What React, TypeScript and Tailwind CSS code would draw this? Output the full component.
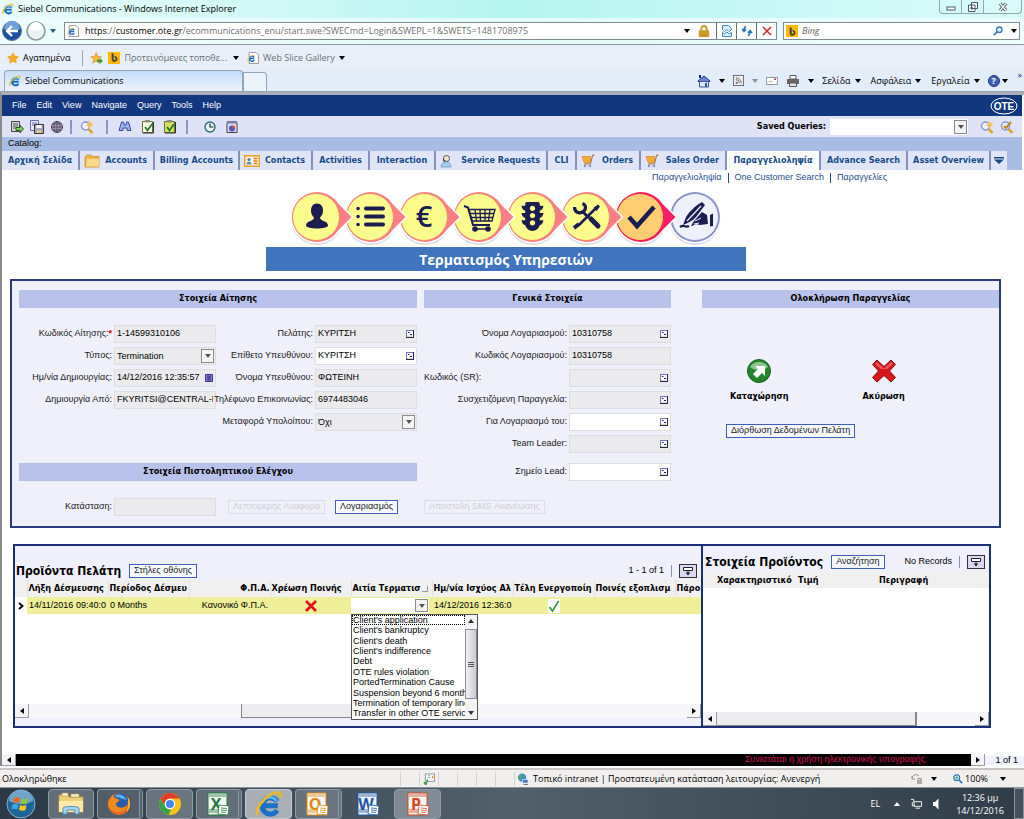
import React from "react";
import { BsBing } from "react-icons/bs";
import { FaTrafficLight, FaStar, FaLock } from "react-icons/fa";

type IconProps = { className?: string };

// wide bold face used by the CRM for titles, tabs and table headers
const boldFont = "font-bold [font-family:'DejaVu_Sans_Condensed','Noto_Sans',sans-serif]";

function Caret({ className = "text-black" }: IconProps) {
    return (
        <svg viewBox="0 0 6 4" className={`w-[6px] h-[4px] shrink-0 ${className}`}>
            <path d="M0 0h6L3 4z" fill="currentColor" />
        </svg>
    );
}

function IeLogo({ className = "w-3 h-3" }: IconProps) {
    return (
        <svg viewBox="0 0 24 24" className={`shrink-0 ${className}`}>
            <path d="M19.5 13.5H7M19 9.8A7 7 0 1 0 19 17.5" fill="none" stroke="#1b6fc4" strokeWidth="4.4" />
            <path d="M18.5 9.5A7 7 0 0 0 6 11" fill="none" stroke="#5bb5f0" strokeWidth="2.4" />
            <path d="M2.5 21.5C-1 17 8 5 17.5 2.5c4-1 5.5 1 4 4.5" fill="none" stroke="#e9b92c" strokeWidth="2.4" />
        </svg>
    );
}

function PageIcon({ className = "w-3 h-3.5" }: IconProps) {
    return (
        <svg viewBox="0 0 14 14" className={`shrink-0 ${className}`}>
            <path d="M2.5 .5h8l3 3v10h-11z" fill="#fff" stroke="#8a8a8a" />
            <path d="M8.5 7.5H3M8.3 6A3 3 0 1 0 8.5 9.5" fill="none" stroke="#1b6fc4" strokeWidth="1.8" />
            <path d="M1 11C0 9 4 4 9 3.5" fill="none" stroke="#e9b92c" strokeWidth="1" />
        </svg>
    );
}

function BingIcon() {
    return (
        <span className="flex h-3 w-3 shrink-0 items-center justify-center bg-[#ffb900] text-[9px] text-[#444]">
            <BsBing />
        </span>
    );
}

// ---------- Browser chrome ----------

function TitleBar() {
    return (
        <div className="flex h-[18px] items-start justify-between bg-linear-to-r from-[#eafcfb] via-[#b6f5f1] to-[#d9fbfa]">
            <div className="flex items-center gap-1 pl-0.5 pt-0.5 text-[9px] text-black">
                <IeLogo />
                <span>Siebel Communications - Windows Internet Explorer</span>
            </div>
            <div className="mr-0.5 flex h-3.5 rounded-b border border-t-0 border-[#8fa9ad] text-[#4a5a66]">
                <button aria-label="Minimize" className="flex w-[22px] items-center justify-center border-r border-[#8fa9ad]">
                    <svg viewBox="0 0 10 8" className="h-2 w-2.5"><rect x="1" y="4" width="8" height="3" fill="#fff" stroke="currentColor" /></svg>
                </button>
                <button aria-label="Restore" className="flex w-[22px] items-center justify-center border-r border-[#8fa9ad]">
                    <svg viewBox="0 0 10 10" className="h-2.5 w-2.5" fill="#fff" stroke="currentColor"><path d="M3.5 .5h6v6h-6zM.5 3h6.5v6.5H.5zM3 5.5h1.5v1.5H3z" /></svg>
                </button>
                <button aria-label="Close" className="flex w-[37px] items-center justify-center">
                    <svg viewBox="0 0 10 9" className="h-2.5 w-2.5"><path d="M2 1l6 7M8 1L2 8" stroke="currentColor" strokeWidth="3.2" /><path d="M2 1l6 7M8 1L2 8" stroke="#fff" strokeWidth="1.2" /></svg>
                </button>
            </div>
        </div>
    );
}

function AddressBar() {
    return (
        <div className="flex h-[27px] items-center border-b border-[#8d959c] bg-linear-to-r from-[#eefcfc] via-[#e3fbfa] to-[#eefdfd] pl-0.5 pr-1">
            <button aria-label="Back" className="shrink-0">
                <svg viewBox="0 0 20 20" className="h-5 w-5">
                    <circle cx="10" cy="10" r="9.5" fill="#1d4f9c" stroke="#5d7894" />
                    <path d="M2 8a8 8 0 0 1 16 0c-5 2-11 2-16 0z" fill="#6f9fdc" />
                    <path d="M16 10H5.5M10 5l-5 5 5 5" fill="none" stroke="#fff" strokeWidth="2.4" />
                </svg>
            </button>
            <button aria-label="Forward" className="ml-1 shrink-0">
                <svg viewBox="0 0 20 20" className="h-5 w-5">
                    <circle cx="10" cy="10" r="9" fill="#e9f1f3" stroke="#8d9aa0" strokeWidth="1.5" />
                    <path d="M3 8a7 7 0 0 1 14 0c-4 2-10 2-14 0z" fill="#fff" />
                </svg>
            </button>
            <Caret className="ml-1 mr-2 text-[#1f5f86]" />
            <div className="flex h-[18px] flex-1 items-center border border-[#7f8c94] bg-white pl-0.5">
                <PageIcon className="h-3 w-3" />
                <p className="ml-1.5 flex-1 overflow-hidden whitespace-nowrap text-[9px] text-[#6f6f6f]">
                    <span className="text-black">https</span>://<span className="text-black">customer.ote.gr</span>
                    /ecommunications_enu/start.swe?SWECmd=Login&amp;SWEPL=1&amp;SWETS=1481708975
                </p>
                <Caret />
                <FaLock className="ml-2 mr-1.5 h-3 w-3 text-[#c79a2b]" />
                <button aria-label="Compatibility" className="flex h-full w-5 items-center justify-center border-l border-[#5f6f78]">
                    <svg viewBox="0 0 12 12" className="h-3 w-3"><path d="M1.5 5V.5h6l3 3V5L8 6.5 6 4.5 3.5 6.5zM1.5 7.5l2 1.5L6 7l2 2 2.5-1.5v4h-9z" fill="#e3f1fb" stroke="#3d87bd" /></svg>
                </button>
                <button aria-label="Refresh" className="flex h-full w-5 items-center justify-center border-l border-[#5f6f78]">
                    <svg viewBox="0 0 12 12" className="h-3 w-3" fill="none" stroke="#2676b8" strokeWidth="1.6"><path d="M5 1.5C3 2 3 3 3 5.5M1 4l2 2.5L5 4M7 10.5c2-.5 2-1.5 2-4M7 8l2-2.5L11 8" /></svg>
                </button>
                <button aria-label="Stop" className="flex h-full w-5 items-center justify-center border-l border-[#5f6f78]">
                    <svg viewBox="0 0 10 10" className="h-2.5 w-2.5"><path d="M1 1l8 8M9 1L1 9" stroke="#cf2a30" strokeWidth="1.6" /></svg>
                </button>
            </div>
            <div className="ml-1.5 flex h-[18px] w-[237px] items-center border border-[#7f8c94] bg-white pl-0.5 pr-0.5">
                <BingIcon />
                <input aria-label="Bing" placeholder="Bing" className="ml-1 w-0 flex-1 text-[9px] italic placeholder:text-[#666]" />
                <svg viewBox="0 0 12 12" className="mr-2 h-2.5 w-2.5"><circle cx="7.5" cy="4.5" r="3.3" fill="#eaf5ff" stroke="#3274b5" strokeWidth="1.6" /><path d="M5 7L1 11" stroke="#3274b5" strokeWidth="2" /></svg>
                <Caret />
            </div>
        </div>
    );
}

function FavoritesBar() {
    return (
        <div className="flex h-[25px] items-center bg-[#e8eff9] pl-[7px] text-[9px] text-[#6b7075]">
            <FaStar className="h-3 w-3 text-[#f0ad2d]" />
            <a href="#" className="ml-1 text-black">Αγαπημένα</a>
            <span className="ml-3 mr-[7px] h-4 w-px bg-[#9aa4b0]" />
            <svg viewBox="0 0 16 14" className="h-3 w-3.5"><path d="M7 .5l2 4.5 4.5.5-3.5 3 1 4.5-4-2.5L3 13l1-4.5-3.5-3L5 5z" fill="#f5b83a" stroke="#c98a1e" strokeWidth=".6" /><path d="M8 9h3V7l4 3.5-4 3.5v-2H8z" fill="#3f9b3a" /></svg>
            <span className="ml-1"><BingIcon /></span>
            <a href="#" className="ml-1 mr-1.5">Προτεινόμενες τοποθε...</a>
            <Caret />
            <span className="ml-2"><PageIcon className="h-3 w-3" /></span>
            <a href="#" className="ml-1 mr-1">Web Slice Gallery</a>
            <Caret />
        </div>
    );
}

function TabRow() {
    return (
        <div className="flex h-[22px] items-end justify-between border-b border-[#98a3b3] bg-[#e3ecf9] pl-1 text-[9px] text-black">
            <div className="flex items-end">
                <button className="flex h-[21px] w-[239px] items-center gap-1 rounded-t border border-b-0 border-[#93a4bd] bg-linear-to-b from-[#c5dcf8] to-[#eef4fc] pl-1">
                    <IeLogo />
                    Siebel Communications
                </button>
                <button aria-label="New tab" className="h-[19px] w-6 rounded-tr border border-b-0 border-[#93a4bd] bg-[#edf3fb]" />
            </div>
            <div className="flex h-full items-center">
                <svg viewBox="0 0 14 14" className="h-3.5 w-3.5"><path d="M1 7l6-5 6 5v.5H1z" fill="#6c86d3" stroke="#26357b" /><path d="M2.5 7.5h9V13h-9z" fill="#dfe5f5" stroke="#47558e" /><path d="M8 9h2v4H8z" fill="#1e5f9b" /><path d="M2 1h2v3H2z" fill="#1c1c8c" /></svg>
                <Caret className="ml-2 mr-2" />
                <svg viewBox="0 0 12 12" className="h-[11px] w-[11px]"><rect x=".5" y=".5" width="11" height="11" fill="#eee" stroke="#666" /><path d="M3 5a4 4 0 0 1 4 4M3 3a6 6 0 0 1 6 6" fill="none" stroke="#666" /><circle cx="4" cy="8.5" r="1.2" fill="#666" /></svg>
                <Caret className="ml-2 mr-2 text-[#8b9097]" />
                <svg viewBox="0 0 13 9" className="h-2 w-3"><rect x=".5" y=".5" width="12" height="8" fill="#fff" stroke="#8b8b8b" /><path d="M9 2.5h2" stroke="#b33" strokeWidth="1.5" /><path d="M3 5h4" stroke="#aaa" /></svg>
                <svg viewBox="0 0 14 12" className="ml-2 h-3 w-3.5"><path d="M4 .5h6V4H4z" fill="#fff" stroke="#555" /><path d="M1 4h12v5H1z" fill="#666" /><path d="M3.5 8h7v3.5h-7z" fill="#e8e8e8" stroke="#555" /></svg>
                <Caret className="ml-2 mr-2" />
                <a href="#">Σελίδα</a><Caret className="ml-1 mr-2.5" />
                <a href="#">Ασφάλεια</a><Caret className="ml-1 mr-2.5" />
                <a href="#">Εργαλεία</a><Caret className="ml-1 mr-2" />
                <span className="flex h-3 w-3 items-center justify-center rounded-full border border-[#26357b] bg-[#3f5fb4] text-[9px] font-bold leading-none text-white">?</span>
                <Caret className="ml-0.5 mr-2.5" />
                <span className="mr-0.5 self-start leading-none text-[#26357b]">»</span>
            </div>
        </div>
    );
}

// ---------- Application header ----------

const menus = ["File", "Edit", "View", "Navigate", "Query", "Tools", "Help"];

function MenuBar() {
    return (
        <div className="flex h-[21px] items-center justify-between bg-[#12377f] pl-2.5 pr-1 text-[9px] text-white">
            <nav className="flex gap-2.5">
                {menus.map((m) => (
                    <a key={m} href="#">{m}</a>
                ))}
            </nav>
            <svg viewBox="0 0 28 18" className="h-[18px] w-7">
                <ellipse cx="14" cy="9" rx="13" ry="8" fill="none" stroke="#fff" />
                <text x="14" y="12.5" textAnchor="middle" fontSize="10" fontWeight="bold" fill="#fff" fontFamily="Liberation Sans">OTE</text>
            </svg>
        </div>
    );
}

function QueryIcon({ star = true }: { star?: boolean }) {
    return (
        <svg viewBox="0 0 14 14" className="h-3.5 w-3.5">
            <path d="M8.5 9l4 4" stroke="#d9a928" strokeWidth="2.6" />
            <circle cx="5.5" cy="6" r="4" fill="#eef1ff" stroke="#8d93d8" strokeWidth="1.4" />
            {star ? (
                <path d="M9 0l1 3 3-1-2 2.5L13.5 6l-3 .2L9 9l-.8-3L5 5l3-1z" fill="#f3bd4e" />
            ) : (
                <path d="M4 6l2 2 5-6" fill="none" stroke="#b98b18" strokeWidth="2" />
            )}
        </svg>
    );
}

function CheckDoc({ bg }: { bg: string }) {
    return (
        <svg viewBox="0 0 12 14" className="h-3.5 w-3">
            <path d="M.5 1.5h10v11H.5z" fill={bg} stroke="#6d6d3a" />
            <path d="M3 0h5v2.5H3z" fill="#8c8c7a" />
            <path d="M3 7l2.5 3.5L10 4" fill="none" stroke="#1f7a2b" strokeWidth="1.8" />
            <path d="M1 13h10.5V2" fill="none" stroke="#333" />
        </svg>
    );
}

function Toolbar() {
    const divider = <span className="h-3.5 w-0.5 bg-[#8e94c6]" />;
    return (
        <div className="flex h-[21px] items-center justify-between bg-[#dfe3f5] pl-2 pr-2">
            <div className="flex items-center">
                <div className="flex items-center gap-1.5 pr-1.5">
                    <svg viewBox="0 0 14 14" className="h-3.5 w-3.5"><path d="M1.5 1.5h8v10h-8z" fill="#d8d8d8" stroke="#444" /><path d="M3 4h5M3 6h5M3 8h4" stroke="#555" /><path d="M6 7.5h4V5l3.5 4L10 13v-2.5H6z" fill="#7ecb5c" stroke="#1e3d17" strokeWidth=".8" /></svg>
                    <svg viewBox="0 0 14 14" className="h-3.5 w-3.5"><path d="M.5 .5h8v10h-8z" fill="#e9e9f7" stroke="#6a6ab0" /><path d="M2 3h5M2 5h5" stroke="#6a6ab0" /><path d="M4.5 4.5h9v9h-9z" fill="#a9a9b8" stroke="#333" /><path d="M6.5 5h5v3h-5z" fill="#fff" /><path d="M7 10.5h4V13H7z" fill="#e6d27a" /></svg>
                    <svg viewBox="0 0 14 14" className="h-3.5 w-3.5"><circle cx="7" cy="7" r="5.5" fill="#b9a8cf" stroke="#444" /><path d="M1.5 7h11M7 1.5v11M2.5 4h9M2.5 10h9M7 1.5c-4 3-4 8 0 11M7 1.5c4 3 4 8 0 11" fill="none" stroke="#3f3f55" strokeWidth=".8" /></svg>
                </div>
                {divider}
                <div className="pl-2 pr-3"><QueryIcon /></div>
                {divider}
                <div className="flex items-center gap-2.5 px-2.5">
                    <svg viewBox="0 0 14 12" className="h-3 w-3.5"><path d="M3.5 1h2l.5 3h2l.5-3h2L13 9.5h-4V7H5v2.5H1z" fill="#9db2ec" stroke="#3b4c9b" /></svg>
                    <CheckDoc bg="#fdfbe6" />
                    <CheckDoc bg="#d6e35b" />
                </div>
                {divider}
                <div className="flex items-center gap-2.5 pl-4">
                    <svg viewBox="0 0 12 12" className="h-3 w-3"><circle cx="6" cy="6" r="5" fill="#eef6ef" stroke="#2b6a78" strokeWidth="1.4" /><path d="M6 2.5V6h3.5" fill="none" stroke="#123" strokeWidth="1.2" /></svg>
                    <svg viewBox="0 0 12 14" className="h-3.5 w-3"><path d="M1 2.5h10v10H1z" fill="#dcd9f2" stroke="#444" /><path d="M1 1h10v2.5H1z" fill="#7c7ca8" /><circle cx="6" cy="8.5" r="3" fill="#5355b8" /><path d="M6 8.5V5.5a3 3 0 0 1 3 3z" fill="#d14a3a" /></svg>
                </div>
            </div>
            <div className="flex items-center">
                <label htmlFor="savedQueries" className={`mr-1 text-[9px] text-black ${boldFont}`}>Saved Queries:</label>
                <SelectBox id="savedQueries" value="" className="h-4 w-[138px] bg-white" />
                <div className="ml-3 flex gap-1.5"><QueryIcon /><QueryIcon star={false} /></div>
            </div>
        </div>
    );
}

function FolderIcon() {
    return <svg viewBox="0 0 16 14" className="h-3.5 w-4"><path d="M1 3l2-2h4l1 1.5h7V13H1z" fill="#f0b64a" stroke="#c98e2a" strokeWidth=".8" /><path d="M3 5h12v7.5H2z" fill="#fbd98c" /></svg>;
}

function CardIcon() {
    return <svg viewBox="0 0 16 12" className="h-3 w-4"><path d="M.7 .7h14.6v10.6H.7z" fill="#fff5d9" stroke="#e0a030" strokeWidth="1.4" /><circle cx="5" cy="4.5" r="1.6" fill="#5677b8" /><path d="M2.5 9.5c0-4 5-4 5 0z" fill="#5a8fd0" /><path d="M9.5 3.5h4M9.5 6h4M9.5 8.5h4" stroke="#c58524" strokeWidth="1.3" /></svg>;
}

function AgentIcon() {
    return <svg viewBox="0 0 12 14" className="h-3.5 w-3"><path d="M1 13c0-7 10-7 10 0z" fill="#a8cdf0" stroke="#6a8fb6" strokeWidth=".7" /><circle cx="6.5" cy="4.5" r="3" fill="#f3e2cc" stroke="#555" /><path d="M3.5 4v3h2" fill="none" stroke="#444" /></svg>;
}

function SmallCart() {
    return <svg viewBox="0 0 14 14" className="h-3.5 w-3.5"><path d="M1 2.5h9l-1 6H3z" fill="#f6a93b" stroke="#d98f2e" strokeWidth=".8" /><path d="M13.5 1h-1.8L9.5 10H3" fill="none" stroke="#a46c2a" /><circle cx="4" cy="12" r="1.3" fill="#7e95cc" /><circle cx="9" cy="12" r="1.3" fill="#7e95cc" /></svg>;
}

const screens = [
    { name: "Αρχική Σελίδα", w: "w-[78px]" },
    { name: "Accounts", w: "w-[75px]", icon: <FolderIcon /> },
    { name: "Billing Accounts", w: "w-[85px]" },
    { name: "Contacts", w: "w-[73px]", icon: <CardIcon /> },
    { name: "Activities", w: "w-[57px]" },
    { name: "Interaction", w: "w-[66px]" },
    { name: "Service Requests", w: "w-[112px]", icon: <AgentIcon /> },
    { name: "CLI", w: "w-[29px]" },
    { name: "Orders", w: "w-[64px]", icon: <SmallCart /> },
    { name: "Sales Order", w: "w-[86px]", icon: <SmallCart /> },
    { name: "Παραγγελιοληψία", w: "w-[94px]", active: true },
    { name: "Advance Search", w: "w-[87px]" },
    { name: "Asset Overview", w: "w-[83px]" },
];

function ScreenTabs() {
    return (
        <nav className={`flex h-[19px] bg-[#a9bce3] text-[9px] text-[#164b86] ${boldFont}`}>
            {screens.map((s) => (
                <a
                    key={s.name}
                    href="#"
                    className={`flex items-center overflow-hidden whitespace-nowrap border-r-2 border-[#8791b8] ${s.w} ${s.active ? "bg-white" : "bg-[#dfe5f6]"} ${s.icon ? "justify-between pl-1 pr-1.5" : "justify-center px-1"}`}
                >
                    {s.icon}
                    <span>{s.name}</span>
                </a>
            ))}
            <button aria-label="More screens" className="flex w-4 items-center justify-center bg-[#dfe5f6]">
                <svg viewBox="0 0 10 7" className="h-[7px] w-2.5"><path d="M0 0h10v1.5H0zM0 2.5h10L5 7z" fill="#164b86" /></svg>
            </button>
        </nav>
    );
}

// ---------- Order progress ----------

function TaskCart() {
    return (
        <g fill="none" stroke="#1b1d50">
            <path d="M12 16l4 1.5L21 35h17" strokeWidth="2" />
            <path d="M17 19.5h26L40 31H20zM23 19.5l1.5 11.5M28 19.5l.5 11.5M33 19.5V31M38 19.5L36.5 31M18 23.5h24M19 27.5h22" strokeWidth="1.3" />
            <path d="M22 39h15" strokeWidth="1.5" />
            <circle cx="23" cy="39" r="2.8" fill="#1b1d50" stroke="none" />
            <circle cx="36" cy="39" r="2.8" fill="#1b1d50" stroke="none" />
        </g>
    );
}

function SigningHand() {
    return (
        <g fill="#1b1d50">
            <path d="M15 35l3-8c4-6 8-10 16-15l3 3-9 12c-4 4-8 6-13 8z" />
            <path d="M19 31l14-15" stroke="#eef1fc" strokeWidth="1.2" />
            <path d="M23 36l3-5 8-9 5 3 1 9-8 1-4-1-4 2z" />
            <path d="M27 31l6-3M26 34l5-1" stroke="#eef1fc" />
            <path d="M42 25l3-1.5V36l-3 .5z" />
            <path d="M12 37c4-3 5 1 9-1" fill="none" stroke="#1b1d50" strokeWidth="2.2" />
        </g>
    );
}

const yellowStep = { fill: "#fcfc8e", ring: "#ee8a70", edge: "#ff7d84", tip: true };

const steps = [
    { ...yellowStep, id: "customer", art: <path d="M27 13.5c4 0 6 3 6 7 0 3-1 5-3 7 0 4 8 3 8 8 0 4-22 4-22 0 0-5 8-4 8-8-2-2-3-4-3-7 0-4 2-7 6-7z" fill="#1b1d50" /> },
    { ...yellowStep, id: "list", art: <g stroke="#1b1d50" strokeWidth="4" strokeLinecap="round"><path d="M22 18.5h17M22 26.5h17M22 34.5h17" /><path d="M14 18.5h.1M14 26.5h.1M14 34.5h.1" strokeWidth="3.5" /></g> },
    { ...yellowStep, id: "price", art: <text x="26" y="37" textAnchor="middle" fontSize="29" fontWeight="600" fill="#1b1d50">€</text> },
    { ...yellowStep, id: "cart", art: <TaskCart /> },
    { ...yellowStep, id: "traffic", art: <FaTrafficLight x="12" y="12" size="29" color="#1b1d50" /> },
    { ...yellowStep, id: "tools", art: <g stroke="#1b1d50" fill="none"><path d="M19 35L36 18" strokeWidth="2.5" /><path d="M34 18l4-3 1.5 1.5-3 4z" fill="#1b1d50" strokeWidth="1" /><path d="M14 38l5-4" strokeWidth="4" /><path d="M14.5 17c0 5 4 7 8 5s4-7 0-8.500" strokeWidth="3.2" /><path d="M23 22l6 6" strokeWidth="3" /><path d="M31 29l7 7" strokeWidth="5" strokeLinecap="round" /></g> },
    { id: "done", art: <path d="M15 27l8 9L40 17" fill="none" stroke="#1b1d50" strokeWidth="4.5" />, fill: "#ffce72", ring: "#f0244a", edge: "#fb1f63", tip: true },
    { id: "sign", art: <SigningHand />, fill: "#eef1fc", ring: "#8a93c8", edge: "#8a93c8", tip: false },
];

function Progress() {
    // drawn from last to first so that each arrow tip lies over the circle that follows it
    return (
        <svg viewBox="0 0 432 56" className="mx-auto h-14 w-[432px] [font-family:'Open_Sans',sans-serif]">
            {steps.map((s, i) => ({ ...s, x: i * 54 })).reverse().map((s) => (
                <g key={s.id} transform={`translate(${s.x} 0)`}>
                    <circle cx="27" cy="29" r="26" fill="#d9dbe4" />
                    {s.tip && <path d="M43 6l20.500 21L43 48z" fill="#fff" />}
                    <circle cx="27" cy="27" r="26.500" fill="#fff" />
                    {s.tip && <path d="M43 8.500L61.500 27 43 45.500z" fill={s.edge} />}
                    <circle cx="27" cy="27" r="25" fill={s.edge} />
                    <circle cx={s.tip ? 26 : 27} cy="27" r="23.500" fill={s.fill} stroke={s.ring} />
                    {s.art}
                </g>
            ))}
        </svg>
    );
}

// ---------- Form controls ----------

function SelectBox({ id, value, className = "" }: { id: string; value: string; className?: string }) {
    return (
        <div className={`relative ${className}`}>
            <select id={id} aria-label={id} className="h-full w-full appearance-none pl-0.5 text-[9px] leading-none text-black">
                <option>{value}</option>
            </select>
            <span className="pointer-events-none absolute inset-y-px right-px flex w-[13px] items-center justify-center border border-[#8a8a8a] bg-[#f4f4f4]">
                <Caret className="text-[#555]" />
            </span>
        </div>
    );
}

function PickIcon() {
    return (
        <svg viewBox="0 0 8 8" className="h-2 w-2">
            <rect width="8" height="8" fill="#f7f7ff" />
            <path d="M0 .5h8M.5 0v8" stroke="#7777b5" />
            <path d="M0 7.5h8M7.5 0v8" stroke="#22226a" />
            <path d="M2 2.5h1.5M4 4.5h2" stroke="#223" />
            <path d="M1 6.5h5" stroke="#e6e08a" />
        </svg>
    );
}

function CalendarIcon() {
    return (
        <svg viewBox="0 0 8 8" className="h-2 w-2">
            <path d="M.5 .5h7v7h-7z" fill="#8d86dd" stroke="#3a348f" />
            <path d="M2 3h4M2 5h4M3 1v6M5 1v6" stroke="#2d2773" strokeWidth=".8" />
        </svg>
    );
}

type FieldProps = {
    id: string;
    label: string;
    value?: string;
    kind?: "text" | "pick" | "date" | "select";
    editable?: boolean;
    required?: boolean;
    alignLeft?: boolean;
};

function Field({ id, label, value = "", kind = "text", editable, required, alignLeft }: FieldProps) {
    const bg = editable ? "bg-white" : "bg-[#ebebed]";
    return (
        <div className="flex h-[18px] items-center text-[9px] text-[#222]">
            <label htmlFor={id} className={`w-0 flex-1 whitespace-nowrap pr-0.5 ${alignLeft ? "" : "flex justify-end"}`}>
                {label}
                {required && <span className="font-bold text-[#d00000]">*</span>}
            </label>
            {kind === "select" ? (
                <SelectBox id={id} value={value} className={`h-[18px] w-[102px] border border-[#dedee2] ${bg}`} />
            ) : (
                <div className={`flex h-[18px] w-[102px] items-center border border-[#dedee2] px-0.5 ${bg}`}>
                    <input id={id} defaultValue={value} readOnly={!editable} className="w-0 flex-1 text-[9px] text-black" />
                    {kind === "pick" && <button aria-label={`${label} pick`}><PickIcon /></button>}
                    {kind === "date" && <button aria-label={`${label} calendar`}><CalendarIcon /></button>}
                </div>
            )}
        </div>
    );
}

function SectionTitle({ children }: { children: React.ReactNode }) {
    return <h2 className={`flex h-[18px] items-center justify-center bg-[#b8c2ea] text-[9px] text-black ${boldFont}`}>{children}</h2>;
}

function OutlineButton({ children, disabled }: { children: React.ReactNode; disabled?: boolean }) {
    return (
        <button
            disabled={disabled}
            className={`flex h-3.5 items-center whitespace-nowrap border px-1 text-[9px] ${disabled ? "border-[#dddde4] text-[#cfcfd6]" : "border-[#3f5fb8] bg-[#f8f9ff] text-[#222]"}`}
        >
            {children}
        </button>
    );
}

function OrderForm() {
    return (
        <section className="ml-2 mr-[9px] grid grid-cols-[398fr_247fr_321fr] gap-x-[7px] border-2 border-[#2a3a7c] bg-[#eff0fa] pb-2.5 pl-[7px] pt-[9px]">
            <div>
                <SectionTitle>Στοιχεία Αίτησης</SectionTitle>
                <div className="grid grid-cols-[197fr_201fr] pt-[17px]">
                    <div className="flex flex-col gap-1">
                        <Field id="orderCode" label="Κωδικός Αίτησης:" value="1-14599310106" required />
                        <Field id="orderType" label="Τύπος:" value="Termination" kind="select" />
                        <Field id="createdAt" label="Ημ/νία Δημιουργίας:" value="14/12/2016 12:35:57" kind="date" />
                        <Field id="createdBy" label="Δημιουργία Από:" value="FKYRITSI@CENTRAL-DOM" />
                    </div>
                    <div className="flex flex-col gap-1">
                        <Field id="customer" label="Πελάτης:" value="ΚΥΡΙΤΣΗ" kind="pick" />
                        <Field id="surname" label="Επίθετο Υπευθύνου:" value="ΚΥΡΙΤΣΗ" kind="pick" editable />
                        <Field id="firstName" label="Όνομα Υπευθύνου:" value="ΦΩΤΕΙΝΗ" />
                        <Field id="phone" label="Τηλέφωνο Επικοινωνίας:" value="6974483046" />
                        <Field id="balance" label="Μεταφορά Υπολοίπου:" value="Όχι" kind="select" />
                    </div>
                </div>
                <div className="pt-8">
                    <SectionTitle>Στοιχεία Πιστοληπτικού Ελέγχου</SectionTitle>
                </div>
                <div className="flex items-center pt-[17px]">
                    <div className="w-[197px]">
                        <Field id="status" label="Κατάσταση:" />
                    </div>
                    <div className="flex gap-2.5 pl-3">
                        <OutlineButton disabled>Λεπτομερής Αναφορά</OutlineButton>
                        <OutlineButton>Λογαριασμός</OutlineButton>
                    </div>
                </div>
            </div>

            <div className="flex flex-col justify-between">
                <div>
                    <SectionTitle>Γενικά Στοιχεία</SectionTitle>
                    <div className="flex flex-col gap-1 pt-[17px]">
                        <Field id="accountName" label="Όνομα Λογαριασμού:" value="10310758" kind="pick" />
                        <Field id="accountCode" label="Κωδικός Λογαριασμού:" value="10310758" />
                        <Field id="srCode" label="Κωδικός (SR):" kind="pick" alignLeft />
                        <Field id="relatedOrder" label="Συσχετιζόμενη Παραγγελία:" kind="pick" />
                        <Field id="onBehalf" label="Για Λογαριασμό του:" kind="pick" editable />
                        <Field id="teamLeader" label="Team Leader:" kind="pick" />
                    </div>
                    <div className="pt-2.5">
                        <Field id="lead" label="Σημείο Lead:" kind="pick" editable />
                    </div>
                </div>
                <div className="flex pb-0.5">
                    <OutlineButton disabled>Αποστολή SMS Ανανέωσης</OutlineButton>
                </div>
            </div>

            <div className="pl-6">
                <SectionTitle>Ολοκλήρωση Παραγγελίας</SectionTitle>
                <div className={`flex gap-[74px] pl-7 pt-[50px] text-[9px] text-black ${boldFont}`}>
                    <button className="flex flex-col items-center gap-1.5">
                        <svg viewBox="0 0 26 26" className="h-[26px] w-[26px]">
                            <circle cx="13" cy="13" r="11.5" fill="#23862c" stroke="#1c5f23" />
                            <path d="M4 9a10 9 0 0 1 18 0c-4 4-14 4-18 0z" fill="#8ec691" />
                            <path d="M9 8h10v10l-3-3-5 5-4-4 5-5z" fill="#fff" />
                        </svg>
                        Καταχώρηση
                    </button>
                    <button className="flex flex-col items-center gap-1.5">
                        <svg viewBox="0 0 26 26" className="h-[26px] w-[26px]">
                            <path d="M6 2l7 6.5L20 2l4.5 4.5L18.5 13l6 6.5L20 24l-7-6.5L6 24l-4.5-4.5 6-6.5-6-6.5z" fill="#d8141c" stroke="#8f0d12" />
                            <path d="M6 4l7 6.5L20 4l2 2-6 5h-6L4 6z" fill="#f0575c" />
                        </svg>
                        Ακύρωση
                    </button>
                </div>
                <div className="flex pl-6 pt-5">
                    <OutlineButton>Διόρθωση Δεδομένων Πελάτη</OutlineButton>
                </div>
            </div>
        </section>
    );
}

// ---------- Product lists ----------

function MenuButton() {
    return (
        <button aria-label="List menu" className="flex h-3.5 w-[18px] items-center justify-center border border-[#333] bg-[#d9daf0]">
            <svg viewBox="0 0 12 10" className="h-2.5 w-3"><path d="M1.5 1.5h9v3h-9z" fill="#fff" stroke="#223" /><path d="M6 4.5V7" stroke="#223" /><path d="M3.5 6.5h5L6 9.5z" fill="#223" /></svg>
        </button>
    );
}

function Arrow({ dir }: { dir: "left" | "right" }) {
    return (
        <button aria-label={`Scroll ${dir}`} className="flex h-full w-3.5 items-center justify-center border-b border-r border-[#9a9aa2] bg-[#f4f4f6]">
            <svg viewBox="0 0 4 6" className={`h-1.5 w-1 ${dir === "right" ? "rotate-180" : ""}`}><path d="M4 0v6L0 3z" fill="#000" /></svg>
        </button>
    );
}

const reasons = [
    "Client's application",
    "Client's bankruptcy",
    "Client's death",
    "Client's indifference",
    "Debt",
    "OTE rules violation",
    "PortedTermination Cause",
    "Suspension beyond 6 months",
    "Termination of temporary line",
    "Transfer in other OTE service",
];

function ReasonList() {
    return (
        <div className="absolute left-0 top-full z-10 flex h-[106px] w-[127px] border border-[#555] bg-white">
            <ul className="flex w-0 flex-1 flex-col text-[9px] text-black">
                {reasons.map((r, i) => (
                    <li
                        key={r}
                        className={`flex flex-1 items-center overflow-hidden whitespace-nowrap pl-px leading-none ${i === 0 ? "outline-1 -outline-offset-1 outline-dotted outline-black" : ""}`}
                    >
                        {r}
                    </li>
                ))}
            </ul>
            <div className="flex w-3 flex-col items-center bg-[#f2f2f4] py-1">
                <svg viewBox="0 0 6 4" className="h-1 w-1.5"><path d="M0 4h6L3 0z" fill="#333" /></svg>
                <div className="mb-3 mt-1.5 flex w-full flex-1 flex-col items-center justify-center gap-px border border-[#8f8f96] bg-linear-to-r from-[#f3f3f5] to-[#c9c9d0]">
                    <span className="h-px w-1.5 bg-[#555]" />
                    <span className="h-px w-1.5 bg-[#555]" />
                    <span className="h-px w-1.5 bg-[#555]" />
                </div>
                <Caret className="text-[#333]" />
            </div>
        </div>
    );
}

const productColumns = ["Λήξη Δέσμευσης", "Περίοδος Δέσμευ", "Φ.Π.Α.", "Χρέωση Ποινής", "Αιτία Τερματισ", "Ημ/νία Ισχύος Αλ", "Τέλη Ενεργοποίη", "Ποινές εξοπλισμ", "Πάρο"];

function CustomerProducts() {
    return (
        <section className="flex flex-col border-2 border-[#1b2f77] bg-[#eff0fa] pb-2 pt-4">
            <div className="flex h-[18px] items-center justify-between pl-px pr-1">
                <div className="flex items-center gap-2">
                    <h2 className={`text-[12px] text-black ${boldFont}`}>Προϊόντα Πελάτη</h2>
                    <OutlineButton>Στήλες οθόνης</OutlineButton>
                </div>
                <div className="flex items-center text-[9px] text-black">
                    1 - 1 of 1
                    <span className="mx-[7px] h-3 w-px bg-[#8a8fb8]" />
                    <MenuButton />
                </div>
            </div>
            <div className="h-[124px] bg-white">
                <table className="w-full table-fixed whitespace-nowrap text-left text-[9px] text-black">
                    <colgroup>
                        <col className="w-3" />
                        {productColumns.slice(0, 8).map((c) => <col key={c} className="w-[81px]" />)}
                        <col />
                    </colgroup>
                    <thead>
                        <tr className={`h-[17px] bg-[#f0f0f1] ${boldFont}`}>
                            <th />
                            {productColumns.map((c, i) => (
                                <th key={c} className={`overflow-hidden border-l border-[#e2e2e6] pl-px leading-none ${c === "Φ.Π.Α." ? "text-right" : ""}`}>
                                    {i === 4 ? (
                                        <span className="flex items-center justify-between pr-1">{c}<svg viewBox="0 0 6 6" className="h-1.5 w-1.5"><path d="M0 5.5h5.5V0" fill="none" stroke="#999" /></svg></span>
                                    ) : c}
                                </th>
                            ))}
                        </tr>
                    </thead>
                    <tbody>
                        <tr className="h-[17px] bg-[#eeef98]">
                            <td className="bg-white">
                                <svg viewBox="0 0 6 8" className="mx-auto h-2 w-1.5"><path d="M1 1l3.5 3L1 7" fill="none" stroke="#000" strokeWidth="1.8" /></svg>
                            </td>
                            <td className="overflow-hidden pl-0.5 leading-none">14/11/2016 09:40:0</td>
                            <td className="pl-0.5 leading-none">0 Months</td>
                            <td className="pr-0.5 text-right leading-none">Κανονικό Φ.Π.Α.</td>
                            <td>
                                <svg viewBox="0 0 12 12" className="mx-auto h-3 w-3"><path d="M1 1l10 10M11 1L1 11" stroke="#e3141c" strokeWidth="2.8" /></svg>
                            </td>
                            <td className="relative">
                                <SelectBox id="reason" value="" className="h-[15px] w-[78px] bg-white" />
                                <ReasonList />
                            </td>
                            <td className="overflow-hidden pl-0.5 leading-none">14/12/2016 12:36:0</td>
                            <td>
                                <svg viewBox="0 0 12 14" className="mx-auto h-3.5 w-3 bg-white"><path d="M1.5 8l3 4L10.5 2" fill="none" stroke="#2c9b35" strokeWidth="1.6" /></svg>
                            </td>
                            <td />
                            <td />
                        </tr>
                    </tbody>
                </table>
            </div>
            <div className="flex h-3.5 justify-between bg-[#f7f7f9]">
                <Arrow dir="left" />
                <div className="flex-1 pl-[212px]"><div className="h-full w-[236px] border-b border-l border-[#85858c] bg-[#ededf0]" /></div>
                <Arrow dir="right" />
            </div>
        </section>
    );
}

function ProductDetails() {
    return (
        <section className="flex flex-col border-2 border-l-0 border-[#1b2f77] bg-[#eff0fa] pt-1.5">
            <div className="flex h-5 items-center justify-between pl-0.5 pr-1">
                <div className="flex items-center gap-2">
                    <h2 className={`text-[12px] text-black ${boldFont}`}>Στοιχεία Προϊόντος</h2>
                    <OutlineButton>Αναζήτηση</OutlineButton>
                </div>
                <div className="flex items-center text-[9px] text-black">
                    No Records
                    <span className="mx-[7px] h-3 w-px bg-[#8a8fb8]" />
                    <MenuButton />
                </div>
            </div>
            <div className="flex-1 bg-white">
                <table className="w-full table-fixed text-left text-[9px] text-black">
                    <colgroup>
                        <col className="w-3" />
                        <col className="w-[81px]" />
                        <col className="w-[81px]" />
                        <col />
                    </colgroup>
                    <thead>
                        <tr className={`h-4 bg-[#f0f0f1] ${boldFont}`}>
                            <th />
                            <th className="pl-0.5 leading-none">Χαρακτηριστικό</th>
                            <th className="pl-0.5 leading-none">Τιμή</th>
                            <th className="pl-0.5 leading-none">Περιγραφή</th>
                        </tr>
                    </thead>
                </table>
            </div>
            <div className="flex h-3.5 justify-between bg-[#f7f7f9]">
                <Arrow dir="left" />
                <div className="flex-1"><div className="h-full w-[200px] border-b border-r-2 border-[#85858c] bg-[#ededf0]" /></div>
                <Arrow dir="right" />
            </div>
        </section>
    );
}

// ---------- Status bar and taskbar ----------

function MessageBar() {
    return (
        <div className="flex h-3 items-center border-l-2 border-[#888] text-[9px] [font-family:'Liberation_Sans',sans-serif]">
            <Arrow dir="left" />
            <p className="flex h-full flex-1 items-center justify-end bg-black pr-11 text-[#d0104c]">Συνιστάται η χρήση ηλεκτρονικής υπογραφής.</p>
            <Arrow dir="right" />
            <span className="bg-[#eef2fc] pl-2.5 pr-1.5 leading-none text-black">1 of 1</span>
        </div>
    );
}

function StatusBar() {
    const cells = [0, 1, 2, 3, 4, 5];
    return (
        <footer className="mt-0.5 flex h-[19px] items-center border-t-2 border-[#c9c5c4] bg-[#f1efee] pl-0.5 text-[9px] text-black">
            <span className="flex-1">Ολοκληρώθηκε</span>
            {cells.map((c) => (
                <span key={c} className="flex h-3.5 w-[19px] items-center justify-center border-l border-[#d5d2d0]">
                    {c === 1 && (
                        <svg viewBox="0 0 13 13" className="h-3 w-3"><path d="M2.5 1h10v8h-10z" fill="#fff" stroke="#889" /><path d="M5 3h3M5 5h3" stroke="#7a9" /><path d="M10.5 3v3" stroke="#d90" strokeWidth="1.4" /><path d="M1 10l2 2.5L5 7" fill="none" stroke="#3d9b3d" strokeWidth="1.8" /></svg>
                    )}
                </span>
            ))}
            <div className="flex h-3.5 w-[397px] items-center gap-1 border-l border-[#d5d2d0] pl-0.5">
                <svg viewBox="0 0 13 13" className="h-3 w-3"><circle cx="5.5" cy="5" r="4.5" fill="#3d8fd1" /><path d="M3 2c3-1 4 2 2 3s-1 3-3 2z" fill="#55b04a" /><path d="M6 7h6v4H6z" fill="#5076c4" stroke="#fff" strokeWidth=".6" /><path d="M7 12.5h5" stroke="#667" /></svg>
                Τοπικό intranet | Προστατευμένη κατάσταση λειτουργίας: Ανενεργή
            </div>
            <svg viewBox="0 0 12 12" className="h-3 w-3"><path d="M1 6a4 4 0 0 1 7-3M1 3v3h3" fill="none" stroke="#999" /><path d="M6 7h5v4H6z" fill="#aaa" /><path d="M7 7V5.5h3V7" fill="none" stroke="#888" /></svg>
            <Caret className="ml-2 mr-4" />
            <svg viewBox="0 0 12 12" className="mr-0.5 h-2.5 w-2.5"><circle cx="4.5" cy="4.5" r="3.5" fill="#e8f5ff" stroke="#2c72b8" strokeWidth="1.4" /><path d="M4.5 2.5v4M2.5 4.5h4" stroke="#2b9b3f" /><path d="M7.5 7.5L11 11" stroke="#2c72b8" strokeWidth="2" /></svg>
            100%
            <Caret className="ml-3 mr-[18px]" />
        </footer>
    );
}

function OfficeIcon({ letter, color }: { letter: string; color: string }) {
    return (
        <svg viewBox="0 0 26 24" className="h-6 w-[26px]">
            <path d="M3 1h19v19l-4 3H3z" fill="#f4f4f4" stroke={color} />
            <path d="M4 2h17v3H4zM4 17h10v4H4z" fill={color} opacity=".4" />
            <text x="11" y="17.5" textAnchor="middle" fontSize="16" fontWeight="bold" fill={color}>{letter}</text>
            <path d="M14 13l10 1-1 9-10-1z" fill="#fff" stroke={color} strokeWidth=".8" />
            <path d="M16 16l6 .5M16 18l6 .5M16 20l5 .5" stroke={color} strokeWidth=".8" />
        </svg>
    );
}

const apps = [
    {
        name: "Explorer",
        look: "w-[46px] border border-[#8f99a3] bg-white/25",
        icon: <svg viewBox="0 0 28 24" className="h-6 w-7"><path d="M2 3h9l1 2h14v15H2z" fill="#ecd07a" stroke="#b89a45" /><path d="M5 1h6v3H5zM14 2h8v3h-8z" fill="#fbf3cf" stroke="#b9a257" strokeWidth=".6" /><path d="M2 9h24v11H2z" fill="#fae9a8" /><path d="M6 22v-6c0-2 16-2 16 0v6h-4v-4h-8v4z" fill="#a9d4ee" stroke="#4f93bd" /></svg>,
    },
    {
        name: "Firefox",
        look: "w-[46px] border border-r-4 border-double border-[#8f99a3] bg-white/15",
        icon: <svg viewBox="0 0 26 26" className="h-6 w-6"><circle cx="13" cy="13" r="12" fill="#e8641c" /><circle cx="14" cy="10" r="9" fill="#2a5cae" /><path d="M8 4c5-3 12 0 13 5-3-2-6-1-7-3-2 0-4 0-6-2z" fill="#5cb0e6" /><path d="M1 11c2-4 4-5 5-8l3 4c3 0 5 1 4 3-2 1-4 2-3 4 2 4 8 4 12 0-1 6-6 9-11 8C5 21 1 17 1 11z" fill="#f08a1d" /><path d="M22 5c4 5 4 12-1 17 2-5 3-11 1-17z" fill="#fbc02d" /></svg>,
    },
    {
        name: "Chrome",
        look: "w-[47px] border border-[#8f99a3] bg-white/25",
        icon: <svg viewBox="0 0 24 24" className="h-6 w-6"><circle cx="12" cy="12" r="11" fill="#fbc116" /><path d="M2.5 6.5A11 11 0 0 1 21.5 6.5H12a5.5 5.5 0 0 0-4.8 8z" fill="#df3d2e" /><path d="M2.5 6.5l4.7 8.3A5.5 5.5 0 0 0 13 17.4L10.5 22.9A11 11 0 0 1 2.5 6.5z" fill="#31a352" /><circle cx="12" cy="12" r="5.2" fill="#fff" /><circle cx="12" cy="12" r="4" fill="#4285f4" /></svg>,
    },
    { name: "Excel", look: "w-[46px] border border-r-4 border-double border-[#8f99a3] bg-white/20", icon: <OfficeIcon letter="X" color="#1f7a3d" /> },
    { name: "Internet Explorer", look: "w-[47px] border border-[#c5ccd2] bg-white/55", icon: <IeLogo className="h-7 w-7" /> },
    { name: "Outlook", look: "w-[47px] border border-r-4 border-double border-[#8f99a3] bg-white/20", icon: <OfficeIcon letter="O" color="#e08a12" /> },
    { name: "Word", look: "w-[46px]", icon: <OfficeIcon letter="W" color="#1d56a8" /> },
    { name: "PowerPoint", look: "w-[47px] border border-[#8f99a3] bg-white/30", icon: <OfficeIcon letter="P" color="#d4471f" /> },
];

function Taskbar() {
    return (
        <div className="flex h-8 items-center justify-between border-t border-[#8c949b] bg-linear-to-r from-[#2b3947] via-[#52606c] to-[#303d49]">
            <div className="flex h-full items-center">
                <button aria-label="Start" className="flex w-12 justify-center pr-1.5">
                    <svg viewBox="0 0 30 30" className="h-[30px] w-[30px]">
                        <circle cx="15" cy="15" r="14" fill="#1f6698" stroke="#a8c6d6" strokeWidth=".8" />
                        <path d="M3 12a12 11 0 0 1 24 0c-7 4-17 4-24 0z" fill="#8ebfdb" opacity=".7" />
                        <path d="M8 9c2-1 4-1 6 0l-1 5c-2-1-4-1-6 0z" fill="#e8642c" />
                        <path d="M15.5 9.5c2 1 4 1 6.5 0l-1 5c-2 1-4 1-6.5 0z" fill="#8cc63e" />
                        <path d="M6.5 15.5c2-1 4-1 6 0l-1 5c-2-1-4-1-6 0z" fill="#3da5e0" />
                        <path d="M14 16c2 1 4 1 6.5 0l-1 5c-2 1-4 1-6.5 0z" fill="#f9c32c" />
                    </svg>
                </button>
                <div className="flex h-[30px] gap-[3px]">
                    {apps.map((a) => (
                        <button key={a.name} aria-label={a.name} className={`flex items-center justify-center rounded-sm ${a.look}`}>
                            {a.icon}
                        </button>
                    ))}
                </div>
            </div>
            <div className="flex h-full items-center text-[9px] text-white">
                <span>EL</span>
                <svg viewBox="0 0 6 4" className="ml-3.5 h-1 w-1.5"><path d="M0 4h6L3 0z" fill="#fff" /></svg>
                <svg viewBox="0 0 13 12" className="ml-2.5 h-3 w-3" fill="none" stroke="#fff"><path d="M4.5 3.5h8v5h-8zM6 10.5h5M1 1h3v3M2.5 4v4h2" /></svg>
                <svg viewBox="0 0 8 12" className="ml-2.5 h-3 w-2"><path d="M1 4h2l3.5-3.5v11L3 8H1z" fill="#fff" /></svg>
                <div className="ml-4 flex flex-col items-center leading-[13px]">
                    <span>12:36 μμ</span>
                    <span>14/12/2016</span>
                </div>
                <span className="ml-2.5 h-full w-2.5 border border-[#8c949b] bg-white/10" />
            </div>
        </div>
    );
}

export default function App() {
    return (
        <div className="flex min-h-screen flex-col bg-white [font-family:'Open_Sans','Noto_Sans',sans-serif]">
            <header>
                <TitleBar />
                <AddressBar />
                <FavoritesBar />
                <TabRow />
            </header>

            <div className="flex flex-1 flex-col border-l-2 border-t-3 border-l-[#8a8a8a] border-t-[#aab0bb] pr-0.5 [font-family:'Liberation_Sans',sans-serif]">
                <MenuBar />
                <Toolbar />
                <div className="h-3.5 bg-[#a9bce3] pl-1.5 text-[9px] leading-3 text-black">Catalog:</div>
                <ScreenTabs />
                <main className="flex flex-col pr-3">
                    <nav className="flex h-4 items-center justify-end gap-1.5 pr-[123px] text-[9px] text-[#1f4f8a]">
                        <a href="#">Παραγγελιοληψία</a>
                        <span className="h-2.5 w-px bg-[#1f4f8a]" />
                        <a href="#">One Customer Search</a>
                        <span className="h-2.5 w-px bg-[#1f4f8a]" />
                        <a href="#">Παραγγελίες</a>
                    </nav>
                    <div className="pt-1"><Progress /></div>
                    <h1 className="mx-auto mt-px flex h-6 w-[480px] items-center justify-center bg-[#4273bd] text-[14px] font-bold text-white [font-family:'Open_Sans',sans-serif]">
                        Τερματισμός Υπηρεσιών
                    </h1>
                    <div className="pt-2"><OrderForm /></div>
                    <div className="mb-4 ml-[11px] mr-[19px] mt-4 grid grid-cols-[690fr_288fr]">
                        <CustomerProducts />
                        <ProductDetails />
                    </div>
                </main>
            </div>

            <MessageBar />
            <StatusBar />
            <Taskbar />
        </div>
    );
}
